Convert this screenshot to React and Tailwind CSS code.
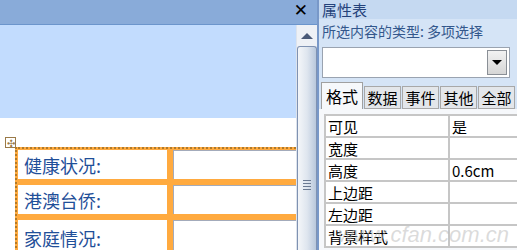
const cjk = { fontFamily: '"Noto Sans CJK SC", "Noto Sans", sans-serif' };

function Scrollbar() {
  return (
    <div className="flex w-[21px] shrink-0 flex-col border-l border-[#dde3ec] bg-[#eef1f6]">
      <div className="flex h-[21px] items-center justify-center">
        <div className="h-0 w-0 border-x-[6px] border-b-[6px] border-x-transparent border-b-[#4a5a78]" />
      </div>
      <div className="relative flex-1 rounded-t-[3px] border border-b-0 border-[#7f92b2] bg-gradient-to-r from-[#f4f6f9] via-[#dfe6ef] to-[#b9c8dc]">
        <div className="absolute left-[5px] top-[133px] flex w-[8px] flex-col gap-[2px]">
          <span className="h-px bg-[#6b7a92]" />
          <span className="h-px bg-[#6b7a92]" />
          <span className="h-px bg-[#6b7a92]" />
          <span className="h-px bg-[#6b7a92]" />
        </div>
      </div>
    </div>
  );
}

function FormRow({ label }) {
  return (
    <div className="flex h-[35px] shrink-0 border-b-[6px] border-[#ffaa3f] last:border-b-0">
      <div className="flex w-[149px] items-center bg-white pl-[6px] text-[18px] leading-none text-[#1f4f99]">{label}</div>
      <div className="w-[6px] bg-[#ffaa3f]" />
      <div className="flex-1 border-l border-t border-[#a3abbb] bg-white" />
    </div>
  );
}

function PropRow({ name, value }) {
  return (
    <div className="flex h-[22px] border-b-2 border-[#c6c6c6] leading-none">
      <div className="flex w-[122px] items-center bg-white pl-[2px]">{name}</div>
      <div className="w-[2px] bg-[#c6c6c6]" />
      <div className="flex flex-1 items-center bg-white pl-[2px]">{value}</div>
    </div>
  );
}

export default function App() {
  const tabs = ["数据", "事件", "其他", "全部"];
  return (
    <div className="relative flex h-[250px] w-[517px] overflow-hidden bg-white" style={cjk}>
      {/* document pane */}
      <div className="flex w-[317px] shrink-0 flex-col">
        <div className="flex h-[25px] shrink-0 items-start justify-end border-b border-[#6b95cc] bg-[#89abd9] pr-[9px] pt-[2px]">
          <span className="text-[17px] font-bold leading-none text-black" style={{ fontFamily: '"DejaVu Sans", sans-serif' }}>✕</span>
        </div>
        <div className="flex flex-1 overflow-hidden">
          <div className="flex flex-1 flex-col">
            <div className="h-[93px] shrink-0 bg-[#c2dcfe]" />
            <div className="flex flex-col pt-[19px]">
              <div className="ml-[5px] flex h-[11px] w-[11px] items-center justify-center border border-[#9a7a48] bg-white text-[10px] leading-none text-[#9a7a48]">
                ✣
              </div>
              <div className="-mt-px ml-[15px] flex flex-col border-l-[2px] border-t-[2px] border-dotted border-[#b07a2a] bg-[#ffaa3f] pl-[1px] pt-[1px]">
                <FormRow label="健康状况:" />
                <FormRow label="港澳台侨:" />
                <FormRow label="家庭情况:" />
              </div>
            </div>
          </div>
          <Scrollbar />
        </div>
      </div>

      {/* property sheet */}
      <div className="flex flex-1 flex-col border-l-2 border-[#7898c8] bg-[#d5e4f6]">
        <div className="flex h-[19px] shrink-0 items-center bg-[#c5d9f1] pl-[3px] text-[15px] leading-none text-[#24427a]">属性表</div>
        <div className="flex h-[24px] shrink-0 items-center pl-[3px] text-[14px] leading-none text-[#33578c]">所选内容的类型: 多项选择</div>
        <div className="ml-[3px] mr-[7px] mt-[4px] flex h-[31px] shrink-0 border border-[#9aa3b0] bg-white">
          <div className="flex-1" />
          <div className="my-[2px] mr-[2px] flex w-[20px] items-center justify-center border border-[#8a8f96] bg-gradient-to-b from-[#f2f2f2] to-[#d6d6d6]">
            <div className="h-0 w-0 border-x-[5px] border-t-[5px] border-x-transparent border-t-black" />
          </div>
        </div>
        <div className="mt-[4px] flex h-[27px] shrink-0 items-end gap-[1px] pl-[2px]">
          <div className="flex h-[27px] w-[42px] items-center justify-center border border-b-0 border-[#a0a0a0] bg-[#f6f8fb] text-[16px] leading-none text-black">格式</div>
          {tabs.map((t) => (
            <div key={t} className="flex h-[23px] w-[37px] items-center justify-center border border-[#a8a8a8] bg-[#e3e6ea] text-[15px] leading-none text-black">
              {t}
            </div>
          ))}
        </div>
        <div className="flex-1 bg-[#f6f8fb] pl-[5px] pt-[5px]">
          <div className="border-l-2 border-t-2 border-[#c6c6c6] text-[15px] text-black">
            <PropRow name="可见" value="是" />
            <PropRow name="宽度" value="" />
            <PropRow name="高度" value="0.6cm" />
            <PropRow name="上边距" value="" />
            <PropRow name="左边距" value="" />
            <PropRow name="背景样式" value="" />
          </div>
        </div>
      </div>

      {/* watermark */}
      <div className="pointer-events-none absolute bottom-[4px] right-[8px] text-[22px] italic leading-none text-[#b8b8b8]/50" style={{ fontFamily: '"Liberation Sans", sans-serif' }}>
        www.cfan.com.cn
      </div>
    </div>
  );
}
